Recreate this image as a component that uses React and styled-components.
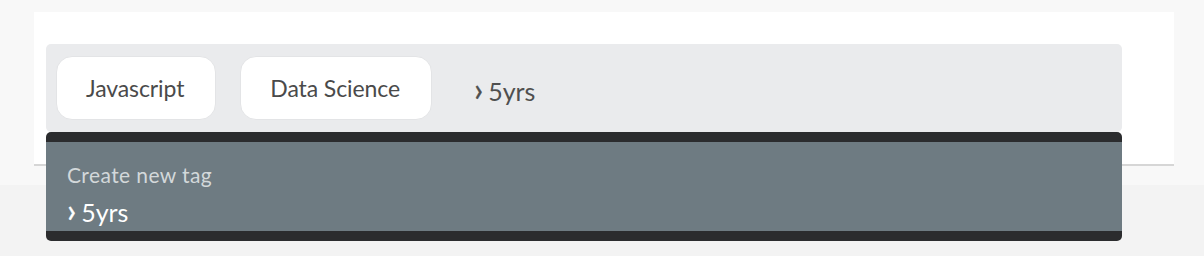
import React from "react";
import styled, { createGlobalStyle } from "styled-components";

const Global = createGlobalStyle`
  html, body { margin: 0; padding: 0; height: 100%; }
  #root { min-height: 100%; }
  body {
    background: #f3f3f3;
    font-family: Lato, "Open Sans", sans-serif;
  }
`;

const Page = styled.div`
  min-height: 256px;
  background: #f3f3f3;
`;

const Section = styled.section`
  background: #f8f8f8;
  padding: 12px 30px 19px 34px;
`;

const Card = styled.div`
  position: relative;
  background: #ffffff;
  border-bottom: 2px solid #d6d6d6;
  padding: 32px 52px 32px 12px;
`;

const Field = styled.div`
  position: relative;
`;

const TagBox = styled.div`
  display: flex;
  align-items: center;
  gap: 24px;
  height: 88px;
  box-sizing: border-box;
  padding: 12px 10px;
  background: #eaebed;
  border-radius: 5px;
`;

const Chip = styled.div`
  display: flex;
  align-items: center;
  height: 64px;
  box-sizing: border-box;
  padding: 0 31px 0 29px;
  background: #ffffff;
  border: 1px solid #e3e4e6;
  border-radius: 16px;
  color: #4a4a4a;
  font-size: 23px;
  letter-spacing: -0.1px;
`;

const Chevron = styled.span`
  font-size: 1.3em;
  font-weight: 400;
  line-height: 1;
  margin-right: 5px;
  -webkit-text-stroke: 0.4px currentColor;
`;

const Input = styled.span`
  margin-left: 18px;
  color: #4f4f4f;
  font-size: 25px;
  line-height: 30px;
  padding-top: 2px;
`;

const Menu = styled.div`
  position: absolute;
  z-index: 5;
  left: 0;
  right: 0;
  top: 88px;
  background: #6e7b82;
  border: 10px solid #2b2c2e;
  border-left: 0;
  border-right: 0;
  border-radius: 5px;
  height: 71px;
  padding: 18px 21px 0;
  box-sizing: content-box;
  display: flex;
  flex-direction: column;
`;

const MenuLabel = styled.div`
  color: #d3d8da;
  font-size: 21px;
  letter-spacing: 0.4px;
  line-height: 30px;
`;

const MenuOption = styled.div`
  margin-top: 3px;
  color: #ffffff;
  font-size: 25px;
  line-height: 38px;
`;

export default function App() {
  return (
    <Page>
      <Global />
      <Section>
        <Card>
          <Field>
            <TagBox>
              <Chip>Javascript</Chip>
              <Chip>Data Science</Chip>
              <Input>
                <Chevron>›</Chevron>5yrs
              </Input>
            </TagBox>
            <Menu>
              <MenuLabel>Create new tag</MenuLabel>
              <MenuOption>
                <Chevron>›</Chevron>5yrs
              </MenuOption>
            </Menu>
          </Field>
        </Card>
      </Section>
    </Page>
  );
}
